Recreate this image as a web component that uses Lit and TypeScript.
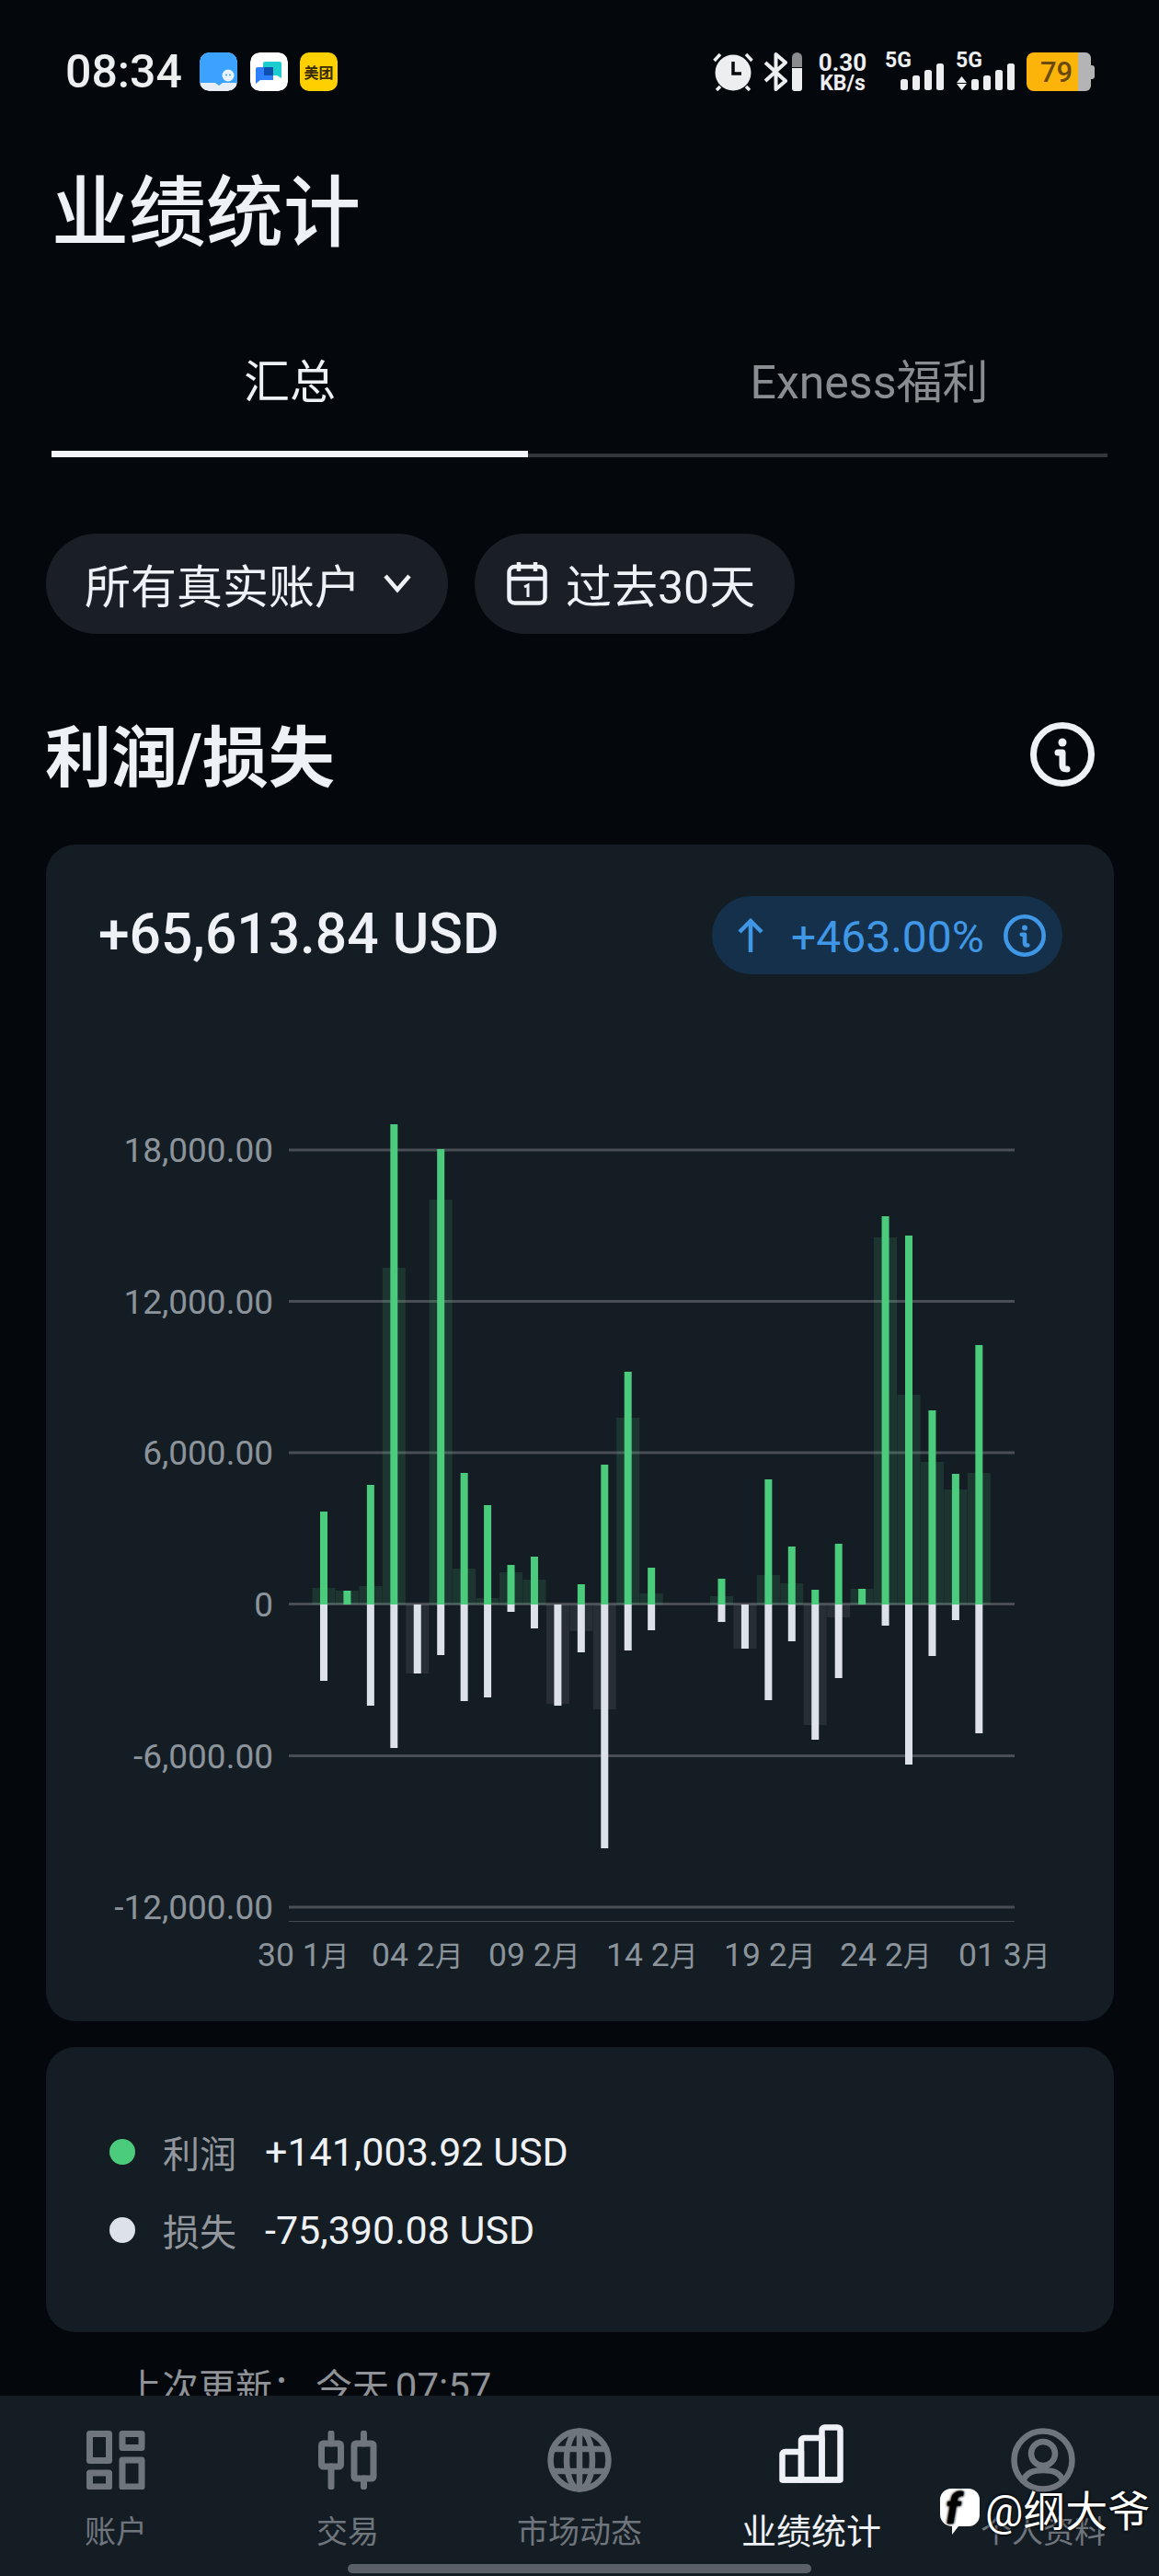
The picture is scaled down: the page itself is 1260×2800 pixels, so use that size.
import { LitElement, html, svg, css } from 'lit';
import { customElement } from 'lit/decorators.js';

// heights in px above / below the zero line, read off the chart
// [profit, loss, shadow] - shadow is positive above zero, negative below
const BARS: ([number, number, number] | null)[] = [
  [101, 83, 18], [15, 0, 15], [130, 110, 20], [522, 156, 366], [0, 75, -75],
  [495, 55, 440], [143, 105, 39], [108, 101, 7], [43, 8, 35], [52, 26, 27],
  [0, 110, -108], [22, 52, -29], [152, 265, -114], [253, 50, 203], [40, 28, 12],
  null, null,
  [28, 19, 9], [0, 48, -48], [136, 104, 32], [63, 40, 23], [16, 147, -131],
  [66, 80, -14], [17, 0, 17], [422, 23, 399], [401, 174, 228], [211, 56, 155],
  [142, 17, 125], [282, 140, 143],
];

const ZERO_Y = 1744;
const BAR_START = 352;
const BAR_STEP = 25.44;

const Y_AXIS = [
  { label: '18,000.00', y: 1250 },
  { label: '12,000.00', y: 1414.5 },
  { label: '6,000.00', y: 1579 },
  { label: '0', y: 1743.5 },
  { label: '-6,000.00', y: 1908.5 },
  { label: '-12,000.00', y: 2073 },
];

const X_AXIS = [
  { label: '30 1', x: 280 },
  { label: '04 2', x: 404 },
  { label: '09 2', x: 531 },
  { label: '14 2', x: 659 },
  { label: '19 2', x: 787 },
  { label: '24 2', x: 913 },
  { label: '01 3', x: 1042 },
];

const infoIcon = (size: number, color: string, stroke: number) => html`
  <svg width=${size} height=${size} viewBox="0 0 70 70" fill="none" stroke=${color}>
    <circle cx="35" cy="35" r=${35 - stroke / 2} stroke-width=${stroke}></circle>
    <circle cx="35" cy="22" r="4.5" fill=${color} stroke="none"></circle>
    <path d="M30 33h5v14c0 3 2 4 5 4" stroke-width=${stroke} stroke-linecap="round" stroke-linejoin="round"></path>
  </svg>
`;

const signal = (withArrows: boolean) => html`
  <svg class="net" width="64" height="42" viewBox="0 0 64 42">
    <text x="0" y="16" class="net-label">5G</text>
    ${withArrows
      ? svg`<path d="M6.5 26l5.5 7H1zM6.5 41l5.5-7H1z" fill="#eceef0"></path>`
      : null}
    <rect x="17" y="29" width="8" height="12" rx="2.5" fill="#eceef0"></rect>
    <rect x="30" y="25" width="8" height="16" rx="2.5" fill="#eceef0"></rect>
    <rect x="43" y="19" width="8" height="22" rx="2.5" fill="#eceef0"></rect>
    <rect x="56" y="12" width="8" height="29" rx="2.5" fill="#eceef0"></rect>
  </svg>
`;

@customElement('app-root')
export class AppRoot extends LitElement {
  static styles = css`
    :host {
      display: block;
      width: 1260px;
      height: 2800px;
      background: #04070c;
      color: #eef1f5;
      font-family: Roboto, 'Noto Sans CJK SC', sans-serif;
    }
    .screen {
      position: relative;
      display: flex;
      flex-direction: column;
      height: 2800px;
      overflow: hidden;
    }
    .content {
      flex: 1;
      min-height: 0;
      overflow: hidden;
    }

    /* status bar */
    .status {
      display: flex;
      justify-content: space-between;
      align-items: center;
      height: 42px;
      padding: 57px 70px 0 71px;
    }
    .status-left,
    .status-right {
      display: flex;
      align-items: center;
    }
    .time {
      font-size: 50px;
      font-weight: 500;
      width: 146px;
      color: #eceef0;
    }
    .app {
      width: 41px;
      height: 42px;
      margin-right: 13.5px;
      border-radius: 10px;
      display: block;
    }
    .meituan {
      display: flex;
      align-items: center;
      justify-content: center;
      background: #ffd000;
      color: #3a2a00;
      font-size: 16px;
      font-weight: 700;
      margin-right: 0;
    }
    .speed {
      display: flex;
      flex-direction: column;
      align-items: center;
      width: 52px;
      margin: 0 20px 0 18px;
      font-weight: 700;
      color: #eceef0;
    }
    .speed b {
      font-size: 26px;
      line-height: 24px;
      font-weight: 700;
    }
    .speed span {
      font-size: 23px;
      line-height: 21px;
    }
    .alarm {
      margin-right: 11px;
    }
    .bt {
      margin-right: 4px;
    }
    .net {
      margin-right: 13px;
      overflow: visible;
    }
    .net-label {
      font-size: 23px;
      font-weight: 700;
      fill: #eceef0;
    }
    .batt-label {
      font-size: 31px;
      font-weight: 500;
      fill: #6b4a0c;
    }

    /* header and tabs */
    h1 {
      margin: 84px 0 0 56px;
      font-size: 84px;
      line-height: 100px;
      font-weight: 500;
    }
    .tabs {
      display: grid;
      grid-template-columns: 1fr 1fr;
      margin-top: 103px;
      font-size: 50px;
      line-height: 60px;
      text-align: center;
    }
    .tabs .off {
      color: #8b8e91;
    }
    .track {
      display: flex;
      align-items: flex-end;
      height: 7px;
      margin: 44px 56px 0;
    }
    .track .on {
      width: 518px;
      height: 7px;
      background: #f2f4f7;
    }
    .track .rest {
      flex: 1;
      height: 4px;
      background: #33373b;
    }

    /* filters */
    .filters {
      display: flex;
      gap: 29px;
      margin: 83px 0 0 50px;
    }
    .pill {
      display: flex;
      align-items: center;
      height: 109px;
      box-sizing: border-box;
      padding-bottom: 2px;
      border-radius: 55px;
      background: #1a1f26;
      font-size: 50px;
    }
    .pill.account {
      width: 437px;
      padding-left: 42px;
      gap: 24px;
    }
    .pill.range {
      width: 348px;
      padding-left: 35px;
      gap: 20px;
    }

    /* section heading */
    .section {
      display: flex;
      align-items: center;
      justify-content: space-between;
      height: 90px;
      margin-top: 91px;
      padding: 0 70px 0 49px;
    }
    .section svg {
      margin-bottom: 10px;
    }
    h2 {
      margin: 0;
      font-size: 72px;
      line-height: 90px;
      font-weight: 700;
    }

    /* cards */
    .card {
      margin: 0 49px 0 50px;
      border-radius: 32px;
      background: #151d24;
    }
    .chart-card {
      height: 1279px;
      margin-top: 48px;
    }
    .chart-top {
      display: flex;
      align-items: center;
      justify-content: space-between;
      padding: 56px 56px 0 57px;
    }
    .amount {
      margin-bottom: 2px;
      font-size: 60.5px;
      font-weight: 500;
    }
    .badge {
      display: flex;
      align-items: center;
      width: 381px;
      height: 85px;
      box-sizing: border-box;
      padding-left: 28px;
      border-radius: 43px;
      background: #14304a;
      color: #3f97e6;
      font-size: 48px;
    }
    .badge .pct {
      margin: 4px 19px 0 30px;
      width: 212px;
      white-space: nowrap;
    }
    .chart {
      display: block;
      margin-top: 60px;
    }
    .axis {
      font-size: 37px;
      fill: #8b939b;
    }
    .axis.date {
      font-size: 35.5px;
    }
    .axis.date tspan {
      font-size: 31px;
    }
    .legend {
      height: 310px;
      box-sizing: border-box;
      margin-top: 28px;
      padding: 71px 0 0 69px;
    }
    .legend-row {
      display: flex;
      align-items: center;
      height: 85px;
      font-size: 43px;
    }
    .dot {
      width: 28px;
      height: 28px;
      border-radius: 50%;
      margin-right: 30px;
    }
    .legend-name {
      width: 111px;
      color: #92979d;
      font-size: 40px;
    }
    .updated {
      margin: 36px 0 0 136px;
      font-size: 40px;
      line-height: 48px;
      color: #8f9297;
      white-space: pre;
      word-spacing: -3px;
    }
    .updated span {
      font-size: 42px;
    }

    /* bottom nav */
    nav {
      flex: none;
      height: 196px;
      box-sizing: border-box;
      padding-top: 31px;
      background: #151d24;
    }
    .nav-items {
      display: grid;
      grid-template-columns: repeat(5, 1fr);
    }
    .nav-item {
      display: flex;
      flex-direction: column;
      align-items: center;
      color: #6f757c;
      font-size: 34px;
    }
    .nav-item.active {
      color: #eef1f5;
      font-size: 38px;
    }
    .nav-icon {
      height: 78px;
      margin-bottom: 19px;
      display: flex;
      align-items: center;
    }
    .active .nav-icon {
      align-items: flex-start;
    }
    .nav-label {
      line-height: 40px;
    }
    .home-bar {
      width: 504px;
      height: 10px;
      margin: 15px auto 0;
      border-radius: 5px;
      background: #5a6068;
    }

    /* watermark over the nav */
    .watermark {
      position: absolute;
      left: 1022px;
      top: 2702px;
      display: flex;
      align-items: center;
      gap: 6px;
      font-size: 46px;
      line-height: 56px;
      color: #fff;
      text-shadow: 0 0 3px #000, 0 0 3px #000;
    }
    .wm-f {
      font-size: 46px;
      font-weight: 700;
      font-style: italic;
      fill: #000;
    }
  `;

  private renderStatus() {
    return html`
      <div class="status">
        <div class="status-left">
          <span class="time">08:34</span>
          <svg class="app" viewBox="0 0 41 42">
            <rect width="41" height="42" rx="10" fill="#e8eef5"></rect>
            <path d="M0 10a10 10 0 0 1 10-10h21a10 10 0 0 1 10 10v23h-16l-4 3-4-3H0z" fill="#3ba3ff"></path>
            <circle cx="31" cy="25" r="6.5" fill="#e8f4ff"></circle>
            <circle cx="29" cy="24.5" r="1" fill="#3ba3ff"></circle>
            <circle cx="33" cy="24.5" r="1" fill="#3ba3ff"></circle>
          </svg>
          <svg class="app" viewBox="0 0 41 42">
            <rect width="41" height="42" rx="10" fill="#fff"></rect>
            <path d="M14 12a2 2 0 0 1 2-2h16a2 2 0 0 1 2 2v16l-5-3H14z" fill="#1ccdcf"></path>
            <path d="M6 18a2 2 0 0 1 2-2h17v14H11l-5 4z" fill="#2f80ff"></path>
            <rect x="15" y="16" width="10" height="9" fill="#0d4fb0"></rect>
          </svg>
          <div class="app meituan">美团</div>
        </div>
        <div class="status-right">
          <svg class="alarm" width="44" height="42" viewBox="0 0 44 42" fill="none">
            <circle cx="22" cy="22" r="19.5" fill="#eceef0"></circle>
            <path d="M22 10v13h9" stroke="#04070c" stroke-width="3.5"></path>
            <path d="M1.5 9 8 2M42.500 9 36 2M4 41l4-4M40 41l-4-4" stroke="#eceef0" stroke-width="3.500"></path>
          </svg>
          <svg class="bt" width="27" height="42" viewBox="0 0 27 42" fill="none">
            <path d="M2 11l22 20-10.500 9V2L24 11 2 31" stroke="#eceef0" stroke-width="4" stroke-linejoin="round"></path>
          </svg>
          <svg width="11" height="42" viewBox="0 0 11 42">
            <path d="M0 16V5.500a5.500 5.500 0 0 1 11 0V16z" fill="#8a8b8c"></path>
            <path d="M0 17h11v22a3 3 0 0 1-3 3H3a3 3 0 0 1-3-3z" fill="#eceef0"></path>
          </svg>
          <div class="speed"><b>0.30</b><span>KB/s</span></div>
          ${signal(false)} ${signal(true)}
          <svg width="74" height="42" viewBox="0 0 74 42">
            <path d="M70 14h1a3 3 0 0 1 3 3v9a3 3 0 0 1-3 3h-1z" fill="#b4b4b4"></path>
            <path d="M56 0h8a6 6 0 0 1 6 6v30a6 6 0 0 1-6 6h-8z" fill="#b4b4b4"></path>
            <path d="M8 0h48v42H8a8 8 0 0 1-8-8V8a8 8 0 0 1 8-8z" fill="#fcb40a"></path>
            <text x="15" y="32" class="batt-label">79</text>
          </svg>
        </div>
      </div>
    `;
  }

  private renderChart() {
    // viewBox uses page coordinates so the numbers line up with the screenshot
    return html`
      <svg class="chart" width="1161" height="1078" viewBox="50 1119 1161 1078">
        ${Y_AXIS.map(
          (t) => svg`
            <line x1="314" x2="1103" y1=${t.y} y2=${t.y} stroke="#484e54" stroke-width="3"></line>
            <text x="297" y=${t.y + 13} text-anchor="end" class="axis">${t.label}</text>
          `
        )}
        <line x1="314" x2="1103" y1="2088.500" y2="2088.500" stroke="#454b52" stroke-width="1"></line>
        ${X_AXIS.map(
          (t) => svg`<text x=${t.x} y="2137" class="axis date">${t.label}<tspan>月</tspan></text>`
        )}
        ${BARS.map((bar, i) => {
          if (!bar) return null;
          const [profit, loss, shade] = bar;
          const cx = BAR_START + i * BAR_STEP;
          return svg`
            <rect x=${cx - 12.5} width="25"
              y=${shade > 0 ? ZERO_Y - shade : ZERO_Y} height=${Math.abs(shade)}
              fill=${shade > 0 ? 'rgba(75,203,124,0.14)' : 'rgba(221,225,233,0.09)'}></rect>
            <rect x=${cx - 4} y=${ZERO_Y - profit} width="8" height=${profit} fill="#4bcb7c"></rect>
            <rect x=${cx - 4} y=${ZERO_Y} width="8" height=${loss} fill="#dde1e9"></rect>
          `;
        })}
      </svg>
    `;
  }

  private renderNav() {
    const items = [
      {
        label: '账户',
        icon: svg`
          <svg width="64" height="64" viewBox="0 0 64 64" fill="none" stroke="#6f757c" stroke-width="7" stroke-linejoin="round">
            <rect x="3.500" y="3.500" width="21" height="29"></rect>
            <rect x="39" y="3.500" width="21" height="15"></rect>
            <rect x="3.500" y="46" width="21" height="15"></rect>
            <rect x="39" y="32" width="21" height="29"></rect>
          </svg>`,
      },
      {
        label: '交易',
        icon: svg`
          <svg width="64" height="64" viewBox="0 0 64 64" fill="none" stroke="#6f757c" stroke-width="7" stroke-linecap="round" stroke-linejoin="round">
            <rect x="3.500" y="14" width="21" height="25" rx="2"></rect>
            <path d="M14 3v11M14 39v22"></path>
            <rect x="39" y="14" width="21" height="38" rx="2"></rect>
            <path d="M49.500 3v11M49.500 52v9"></path>
          </svg>`,
      },
      {
        label: '市场动态',
        icon: svg`
          <svg width="70" height="70" viewBox="0 0 70 70" fill="none" stroke="#6f757c" stroke-width="6.500">
            <circle cx="35" cy="35" r="31.500"></circle>
            <ellipse cx="35" cy="35" rx="14" ry="31.500"></ellipse>
            <path d="M35 3v64M8 23h54M8 47h54"></path>
          </svg>`,
      },
      {
        label: '业绩统计',
        active: true,
        icon: svg`
          <svg width="70" height="64" viewBox="0 0 70 64" fill="none" stroke="#eef1f5" stroke-width="6.500" stroke-linejoin="round">
            <path d="M3.500 60.500V33a3 3 0 0 1 3-3h17.500v30.500z"></path>
            <path d="M24 60.500V18a3 3 0 0 1 3-3h19.500v45.500z"></path>
            <path d="M46.500 60.500V6.500a3 3 0 0 1 3-3h14a3 3 0 0 1 3 3v54z"></path>
            <path d="M3.500 60.500h63"></path>
          </svg>`,
      },
      {
        label: '个人资料',
        icon: svg`
          <svg width="70" height="70" viewBox="0 0 70 70" fill="none" stroke="#6f757c" stroke-width="6.500">
            <circle cx="35" cy="35" r="31.500"></circle>
            <circle cx="35" cy="28" r="13"></circle>
            <path d="M13 58c4-10 12-12 22-12s18 2 22 12"></path>
          </svg>`,
      },
    ];
    return html`
      <nav>
        <div class="nav-items">
          ${items.map(
            (item) => html`
              <div class="nav-item ${item.active ? 'active' : ''}">
                <div class="nav-icon">${item.icon}</div>
                <div class="nav-label">${item.label}</div>
              </div>
            `
          )}
        </div>
        <div class="home-bar"></div>
      </nav>
    `;
  }

  render() {
    return html`
      <div class="screen">
        <div class="content">
          ${this.renderStatus()}
          <h1>业绩统计</h1>
          <div class="tabs">
            <div>汇总</div>
            <div class="off">Exness福利</div>
          </div>
          <div class="track"><div class="on"></div><div class="rest"></div></div>

          <div class="filters">
            <div class="pill account">
              <span>所有真实账户</span>
              <svg width="32" height="22" viewBox="0 0 32 22" fill="none" stroke="#eef1f5" stroke-width="4.500">
                <path d="M3 3l13 15L29 3"></path>
              </svg>
            </div>
            <div class="pill range">
              <svg width="44" height="48" viewBox="0 0 44 48" fill="none" stroke="#eef1f5" stroke-width="4.500">
                <rect x="2.500" y="6" width="39" height="39.500" rx="6"></rect>
                <path d="M2.500 19h39M13 1v10M31 1v10"></path>
                <path d="M19 28l4-2v13" stroke-width="3"></path>
              </svg>
              <span>过去30天</span>
            </div>
          </div>

          <div class="section">
            <h2>利润/损失</h2>
            ${infoIcon(70, '#eef1f5', 7)}
          </div>

          <div class="card chart-card">
            <div class="chart-top">
              <div class="amount">+65,613.84 USD</div>
              <div class="badge">
                <svg width="28" height="38" viewBox="0 0 28 38" fill="none" stroke="#3f97e6" stroke-width="4.500">
                  <path d="M14 37V3M2 15L14 3l12 12"></path>
                </svg>
                <span class="pct">+463.00%</span>
                ${infoIcon(46, '#3f97e6', 7)}
              </div>
            </div>
            ${this.renderChart()}
          </div>

          <div class="card legend">
            <div class="legend-row">
              <span class="dot" style="background:#4bcb7c"></span>
              <span class="legend-name">利润</span>
              <span>+141,003.92 USD</span>
            </div>
            <div class="legend-row">
              <span class="dot" style="background:#dde1e9"></span>
              <span class="legend-name">损失</span>
              <span>-75,390.08 USD</span>
            </div>
          </div>

          <div class="updated">上次更新： 今天 <span>07:57</span></div>
        </div>
        ${this.renderNav()}
        <div class="watermark">
          <svg width="43" height="50" viewBox="0 0 43 50">
            <path d="M12 0h19a12 12 0 0 1 12 12v17a12 12 0 0 1-12 12H20l-7 9v-9A13 13 0 0 1 0 28V12A12 12 0 0 1 12 0z" fill="#fff"></path>
            <text x="6" y="38" class="wm-f">f</text>
          </svg>
          <span>@纲大爷</span>
        </div>
      </div>
    `;
  }
}
